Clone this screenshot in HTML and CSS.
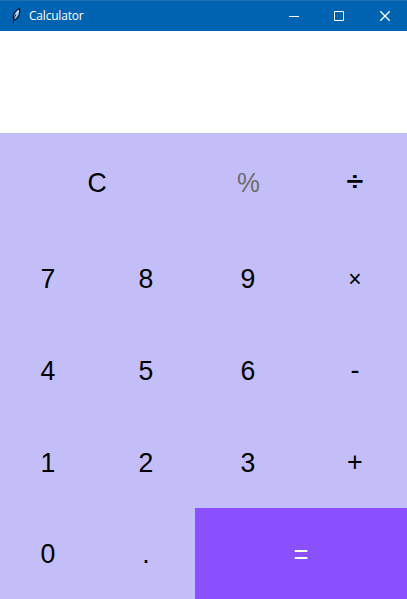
FILE: index.html
```html
<!DOCTYPE html>
<html lang="en">
<head>
<meta charset="utf-8">
<title>Calculator</title>
<link rel="stylesheet" href="styles.css">
</head>
<body>
<header class="titlebar">
  <svg class="feather" width="12" height="18" viewBox="0 0 12 18"><path d="M3.500 12C2.500 8 5 4 9.300 1.500C11 5 9 11 5 13Z" fill="#83b9ed" stroke="#06101e" stroke-width="1.200"/><path d="M4.500 11L8.500 3.500" stroke="#e4f3ff" stroke-width="1.200"/><path d="M3.500 16.500V12L6 7.500" stroke="#06101e" fill="none" stroke-width="1"/></svg>
  <span class="title">Calculator</span>
  <div class="controls">
    <svg width="46" height="30" viewBox="0 0 46 30"><path d="M19 15.500h10"/></svg>
    <svg width="46" height="30" viewBox="0 0 46 30"><path d="M18.500 10.500h9v9h-9z"/></svg>
    <svg width="46" height="30" viewBox="0 0 46 30"><path class="close" d="M18.300 10.300l9.400 9.400M27.700 10.300l-9.400 9.400"/></svg>
  </div>
</header>
<div class="display"></div>
<main class="keys">
  <button class="wide"><span>C</span></button><button class="off"><span>%</span></button><button class="divide"><span>÷</span></button>
  <button><span>7</span></button><button><span>8</span></button><button><span>9</span></button><button class="times"><span>×</span></button>
  <button><span>4</span></button><button><span>5</span></button><button><span>6</span></button><button class="operator"><span>-</span></button>
  <button><span>1</span></button><button><span>2</span></button><button><span>3</span></button><button class="operator"><span>+</span></button>
  <button><span>0</span></button><button><span>.</span></button><button class="wide equals"><span>=</span></button>
</main>
</body>
</html>
```
FILE: styles.css
```css
body { margin: 0; width: 407px; height: 599px; overflow: hidden; display: flex; flex-direction: column; }
.titlebar { box-sizing: border-box; height: 31px; flex: none; display: flex; align-items: center; background: #0063b1; border-top: 1px solid #1a73b9; color: #fff; font: 12px "Open Sans", sans-serif; }
.feather { margin-left: 10px; margin-top: -1px; }
.title { margin-left: 7px; margin-top: -2px; letter-spacing: -0.2px; }
.controls { display: flex; margin-left: auto; margin-right: -1px; margin-top: -1px; }
.controls svg { fill: none; stroke: #fff; stroke-width: 1; }
.controls .close { stroke-width: 1.3; }
.display { height: 102px; flex: none; background: #fff; }
.keys { flex: 1; display: grid; grid-template-columns: 97px 98px 107px 105px; grid-template-rows: 99px 92px 92px 92px 91px; background: #c3bef7; }
button { border: 0; padding: 1px 1px 0 0; background: none; color: #000; font: 28px "Liberation Sans", sans-serif; }
button span { display: inline-block; transform: scaleX(.95); }
.wide { grid-column: span 2; padding-right: 0; }
.off { color: #6d6d6d; }
.off span { transform: scaleX(.92); }
.divide { font-size: 29px; font-weight: bold; padding: 0 0 3px 1px; }
.divide span { transform: scale(1.05, .9); }
.times { font-size: 24px; padding: 1px 0 0 1px; }
.operator { font-size: 27px; padding: 1px 0 0 1px; }
.operator span { transform: none; }
.equals { background: #8a4fff; color: #fff; font-size: 27px; padding-top: 3px; }
```
